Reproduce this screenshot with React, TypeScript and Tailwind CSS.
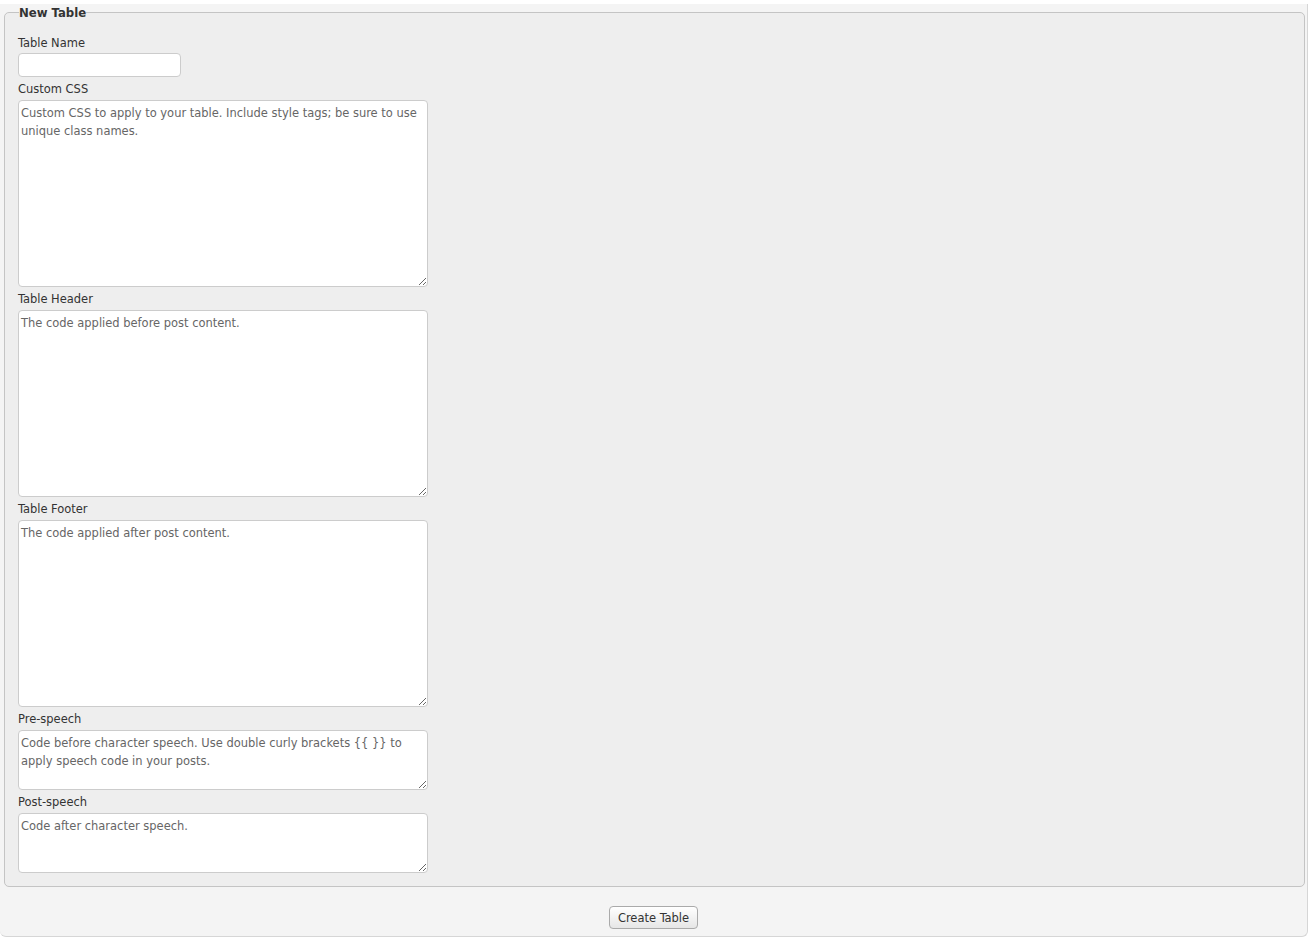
const font = "font-['DejaVu_Sans_Condensed','DejaVu_Sans',sans-serif]";

const fields = [
  { label: "Custom CSS", placeholder: "Custom CSS to apply to your table. Include style tags; be sure to use unique class names.", h: "h-[187px]" },
  { label: "Table Header", placeholder: "The code applied before post content.", h: "h-[187px]" },
  { label: "Table Footer", placeholder: "The code applied after post content.", h: "h-[187px]" },
  { label: "Pre-speech", placeholder: "Code before character speech. Use double curly brackets {{ }} to apply speech code in your posts.", h: "h-[60px]" },
  { label: "Post-speech", placeholder: "Code after character speech.", h: "h-[60px]" },
];

export default function App() {
  return (
    <div className={`min-h-screen bg-white ${font} text-[12.75px] text-[#333]`}>
      <div className="w-[1308px] h-[933px] bg-[#f4f4f4] border-r border-b border-[#d6d6d6] rounded-b-[6px]">
        <fieldset className="ml-[4px] mt-[4px] w-[1301px] h-[883px] bg-[#eeeeee] border border-[#c4c4c4] rounded-[5px] pl-[13px] pt-[9px]">
          <legend className="ml-px px-0 text-[13px] font-bold leading-[17px] text-[#333]">New Table</legend>
          <label className="block h-[23px] leading-[26px]">Table Name</label>
          <input
            type="text"
            className="block w-[163px] h-[24px] bg-white border border-[#ccc] rounded-[4px] px-[3px] outline-none"
          />
          {fields.map((f) => (
            <div key={f.label}>
              <label className="block h-[23px] leading-[24px]">{f.label}</label>
              <textarea
                placeholder={f.placeholder}
                className={`block w-[410px] ${f.h} bg-white border border-[#ccc] rounded-[4px] px-[2px] pt-[3px] pb-[2px] leading-[18px] text-[12.75px] placeholder:text-[#666] outline-none`}
              />
            </div>
          ))}
        </fieldset>
        <div className="text-center pt-[19px]">
          <button className="h-[23px] px-[8px] rounded-[4px] border border-[#aaa] bg-gradient-to-b from-white to-[#e6e6e6] text-[12.75px] text-[#333]">
            Create Table
          </button>
        </div>
      </div>
    </div>
  );
}
